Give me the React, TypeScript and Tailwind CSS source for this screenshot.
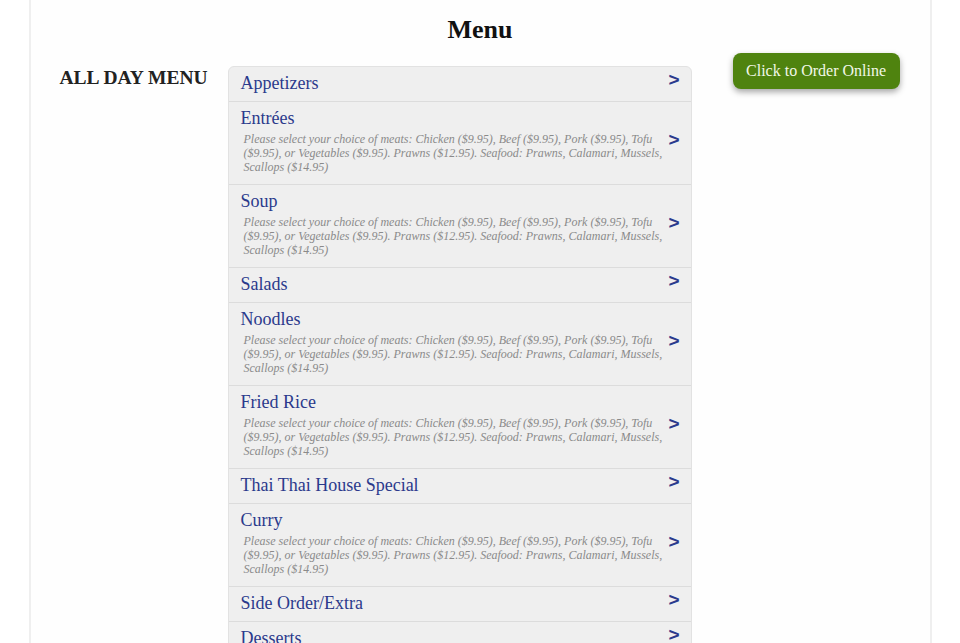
import React from "react";

const DESC =
  "Please select your choice of meats: Chicken ($9.95), Beef ($9.95), Pork ($9.95), Tofu ($9.95), or Vegetables ($9.95). Prawns ($12.95). Seafood: Prawns, Calamari, Mussels, Scallops ($14.95)";

const items: { title: string; desc?: boolean }[] = [
  { title: "Appetizers" },
  { title: "Entrées", desc: true },
  { title: "Soup", desc: true },
  { title: "Salads" },
  { title: "Noodles", desc: true },
  { title: "Fried Rice", desc: true },
  { title: "Thai Thai House Special" },
  { title: "Curry", desc: true },
  { title: "Side Order/Extra" },
  { title: "Desserts" },
];

export default function App() {
  return (
    <div
      className="bg-white h-[643px] overflow-hidden"
      style={{ fontFamily: '"Liberation Serif", serif' }}
    >
      <div className="mx-auto w-[903px] h-full border-x-2 border-[#efefef] bg-[#fefefe]">
        <h1 className="text-center text-[26px] font-bold text-[#111] pt-[15px] leading-[30px]">
          Menu
        </h1>
        <div className="flex pl-[29px] pt-[21px]">
          <div className="w-[168px]">
            <h2 className="text-[19.5px] font-bold text-[#222] leading-[26px] mt-[-1px]">
              ALL DAY MENU
            </h2>
          </div>
          <div className="w-[464px] rounded-t-[6px] border border-[#e2e2e2] bg-[#efefef] overflow-hidden">
            {items.map((it, i) => (
              <div
                key={i}
                className={
                  "flex items-center pl-[12px] pr-[11px] " +
                  (i > 0 ? "border-t border-[#dcdcdc] " : "") +
                  (it.desc ? "pt-[6px] pb-[10px]" : "pt-[6px] pb-[7px]")
                }
              >
                <div className="flex-1">
                  <div className="text-[18px] leading-[21px] text-[#2b3a8c]">
                    {it.title}
                  </div>
                  {it.desc && (
                    <div className="mt-[3px] pl-[3px] pr-[2px] text-[12px] leading-[14px] italic text-[#8a8a8a]">
                      {DESC}
                    </div>
                  )}
                </div>
                <div
                  className={
                    "w-[14px] text-right text-[19px] leading-[20px] font-bold text-[#2b3a8c] " +
                    (it.desc ? "mt-[-2px]" : "mt-[-7px]")
                  }
                  style={{ fontFamily: '"Liberation Sans", sans-serif' }}
                >
                  &gt;
                </div>
              </div>
            ))}
          </div>
          <div className="flex-1 flex justify-end pr-[30px]">
            <button className="mt-[-13px] h-[36px] px-[13.5px] rounded-[8px] bg-[#4f830f] text-[16px] text-[#f2f8e8] shadow-[0_3px_6px_rgba(0,0,0,0.35)]">
              Click to Order Online
            </button>
          </div>
        </div>
      </div>
    </div>
  );
}
